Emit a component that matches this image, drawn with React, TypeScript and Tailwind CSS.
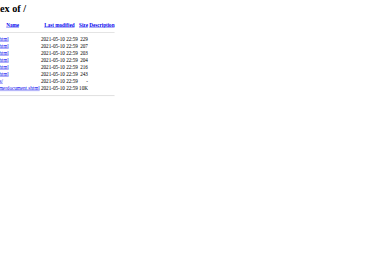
import React from "react";

const rows = [
  { name: "error1.html", size: "229" },
  { name: "error2.html", size: "207" },
  { name: "error3.html", size: "203" },
  { name: "error4.html", size: "204" },
  { name: "error5.html", size: "216" },
  { name: "error6.html", size: "243" },
  { name: "uploads/", size: "-" },
  { name: "bcustomerdocument.shtml", size: "10K" },
];

export default function App() {
  return (
    <div className="h-[260px] w-[380px] overflow-hidden bg-white">
      <div className="origin-top-left scale-[0.32] w-[1187px] -ml-[18px] -mt-[4px] px-[8px] pt-[21.44px] font-['Liberation_Serif',serif] text-[16px] leading-[normal] text-black">
        <h1 className="text-[32px] font-bold mb-[21.44px] text-black">Index of /</h1>
        <table className="border-separate border-spacing-[2px]">
          <tbody>
            <tr>
              <th className="p-px text-center font-bold">
                <a href="#" className="text-[#0000ee] underline">Name</a>
              </th>
              <th className="p-px text-center font-bold">
                <a href="#" className="text-[#0000ee] underline">Last modified</a>
              </th>
              <th className="p-px text-center font-bold">
                <a href="#" className="text-[#0000ee] underline">Size</a>
              </th>
              <th className="p-px text-center font-bold">
                <a href="#" className="text-[#0000ee] underline">Description</a>
              </th>
            </tr>
            <tr>
              <th colSpan={4} className="p-px">
                <hr className="my-[8px] border border-[#9a9a9a] border-b-[#eeeeee] border-r-[#eeeeee]" />
              </th>
            </tr>
            {rows.map((r) => (
              <tr key={r.name}>
                <td className="p-px">
                  <a href="#" className="text-[#0000ee] underline">{r.name}</a>
                </td>
                <td className="p-px text-right">2021-05-10 22:59</td>
                <td className="p-px text-right">{r.size}</td>
                <td className="p-px">&nbsp;</td>
              </tr>
            ))}
            <tr>
              <th colSpan={4} className="p-px">
                <hr className="my-[8px] border border-[#9a9a9a] border-b-[#eeeeee] border-r-[#eeeeee]" />
              </th>
            </tr>
          </tbody>
        </table>
      </div>
    </div>
  );
}
